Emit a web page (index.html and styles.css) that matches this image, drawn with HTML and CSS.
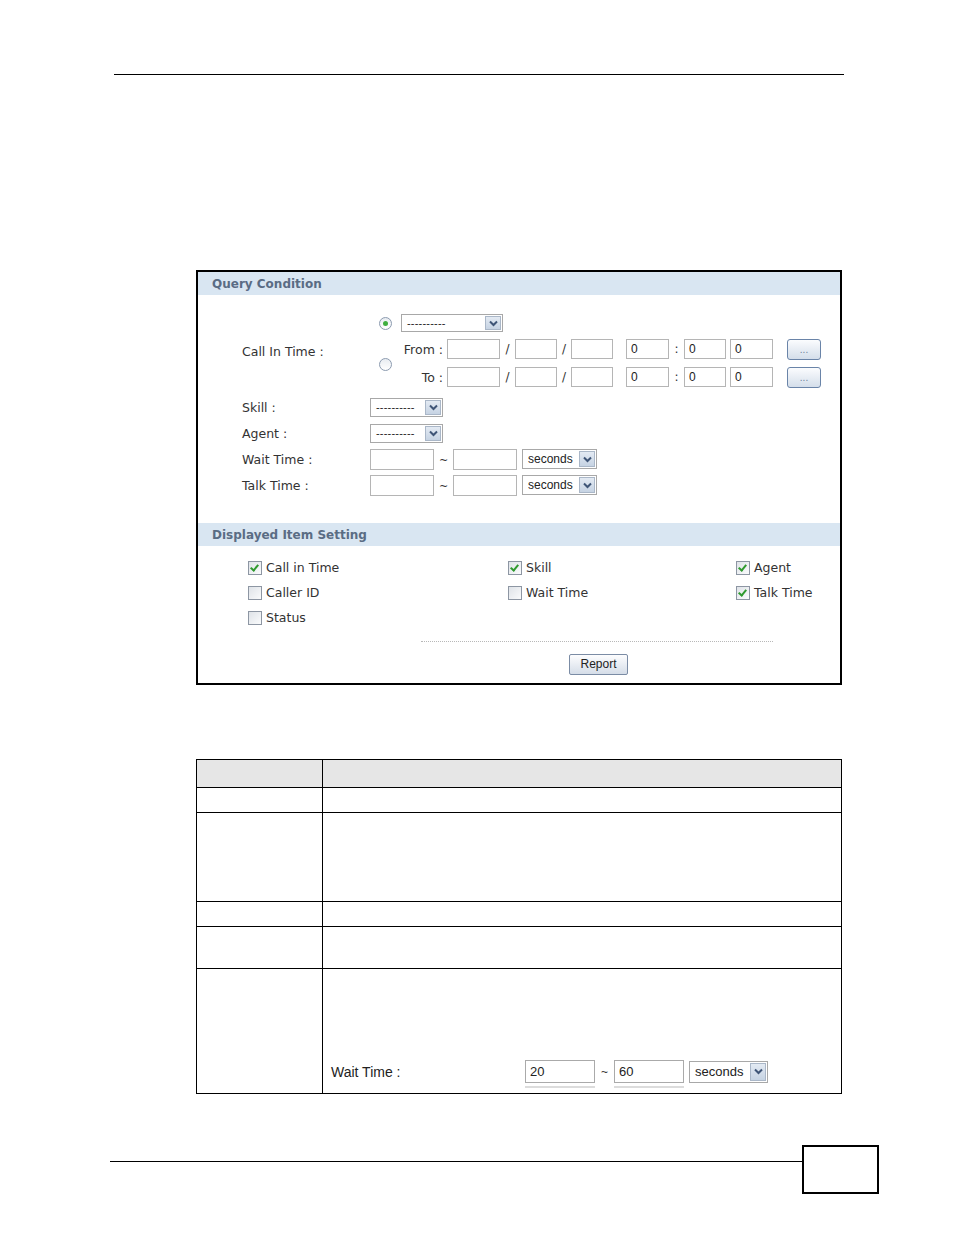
FILE: index.html
```html
<!DOCTYPE html>
<html lang="en">
<head>
    <meta charset="UTF-8">
    <meta name="viewport" content="width=device-width, initial-scale=1.0">
    <title>Call Report</title>
    <link rel="stylesheet" href="styles.css">
</head>
<body>
    <div class="top-rule"></div>

    <div class="figure">
        <div class="band">Query Condition</div>
        <div class="query">
            <div class="call-in">
                <div class="label call-label">Call In Time :</div>
                <div class="radio-col">
                    <div class="radio-cell"><span class="radio checked"></span></div>
                    <div class="radio-cell grow"><span class="radio"></span></div>
                </div>
                <div class="ci-content">
                    <div class="ci-row first">
                        <div class="select wide">
                            <span class="select-text dashes">----------</span>
                            <span class="arrow"><svg width="9" height="7" viewBox="0 0 9 7"><polyline points="1,1.5 4.5,5 8,1.5" fill="none" stroke="#3f5577" stroke-width="2"/></svg></span>
                        </div>
                    </div>
                    <div class="ci-row">
                        <span class="ci-label">From :</span>
                        <span class="field w53"></span><span class="sep s15">/</span>
                        <span class="field w42"></span><span class="sep s14">/</span>
                        <span class="field w42"></span>
                        <span class="field w43 gap13">0</span><span class="sep s15">:</span>
                        <span class="field w42">0</span>
                        <span class="field w43 gap4">0</span>
                        <button class="dots">...</button>
                    </div>
                    <div class="ci-row last">
                        <span class="ci-label">To :</span>
                        <span class="field w53"></span><span class="sep s15">/</span>
                        <span class="field w42"></span><span class="sep s14">/</span>
                        <span class="field w42"></span>
                        <span class="field w43 gap13">0</span><span class="sep s15">:</span>
                        <span class="field w42">0</span>
                        <span class="field w43 gap4">0</span>
                        <button class="dots">...</button>
                    </div>
                </div>
            </div>

            <div class="q-row">
                <div class="label">Skill :</div>
                <div class="select short">
                    <span class="select-text dashes">----------</span>
                    <span class="arrow"><svg width="9" height="7" viewBox="0 0 9 7"><polyline points="1,1.5 4.5,5 8,1.5" fill="none" stroke="#3f5577" stroke-width="2"/></svg></span>
                </div>
            </div>
            <div class="q-row">
                <div class="label">Agent :</div>
                <div class="select short">
                    <span class="select-text dashes">----------</span>
                    <span class="arrow"><svg width="9" height="7" viewBox="0 0 9 7"><polyline points="1,1.5 4.5,5 8,1.5" fill="none" stroke="#3f5577" stroke-width="2"/></svg></span>
                </div>
            </div>
            <div class="q-row">
                <div class="label">Wait Time :</div>
                <span class="field w64 tall"></span><span class="sep tilde">~</span><span class="field w64 tall"></span>
                <div class="select unit">
                    <span class="select-text">seconds</span>
                    <span class="arrow"><svg width="9" height="7" viewBox="0 0 9 7"><polyline points="1,1.5 4.5,5 8,1.5" fill="none" stroke="#3f5577" stroke-width="2"/></svg></span>
                </div>
            </div>
            <div class="q-row">
                <div class="label">Talk Time :</div>
                <span class="field w64 tall"></span><span class="sep tilde">~</span><span class="field w64 tall"></span>
                <div class="select unit">
                    <span class="select-text">seconds</span>
                    <span class="arrow"><svg width="9" height="7" viewBox="0 0 9 7"><polyline points="1,1.5 4.5,5 8,1.5" fill="none" stroke="#3f5577" stroke-width="2"/></svg></span>
                </div>
            </div>
        </div>

        <div class="band">Displayed Item Setting</div>
        <div class="items">
            <label class="item"><span class="check on"></span>Call in Time</label>
            <label class="item"><span class="check on"></span>Skill</label>
            <label class="item"><span class="check on"></span>Agent</label>
            <label class="item"><span class="check"></span>Caller ID</label>
            <label class="item"><span class="check"></span>Wait Time</label>
            <label class="item"><span class="check on"></span>Talk Time</label>
            <label class="item"><span class="check"></span>Status</label>
        </div>
        <div class="dotted"></div>
        <div class="actions"><button class="report">Report</button></div>
    </div>

    <table class="desc">
        <tr class="head"><th class="c1"></th><th></th></tr>
        <tr class="r1"><td></td><td></td></tr>
        <tr class="r2"><td></td><td></td></tr>
        <tr class="r3"><td></td><td></td></tr>
        <tr class="r4"><td></td><td></td></tr>
        <tr class="r5">
            <td></td>
            <td class="example">
                <div class="ex-row">
                    <span class="ex-label">Wait Time :</span>
                    <span class="under"><span class="field ex-field">20</span></span>
                    <span class="sep ex-tilde">~</span>
                    <span class="under"><span class="field ex-field">60</span></span>
                    <div class="select ex-unit">
                        <span class="select-text">seconds</span>
                        <span class="arrow"><svg width="9" height="7" viewBox="0 0 9 7"><polyline points="1,1.5 4.5,5 8,1.5" fill="none" stroke="#3f5577" stroke-width="2"/></svg></span>
                    </div>
                </div>
            </td>
        </tr>
    </table>

    <div class="footer">
        <div class="foot-rule"></div>
        <div class="page-box"></div>
    </div>
</body>
</html>
```

FILE: styles.css
```css
body {
    margin: 0;
    background: #fff;
    color: #000;
    font-family: "DejaVu Sans", Verdana, sans-serif;
}
.top-rule {
    margin: 74px 0 0 114px;
    width: 730px;
    border-top: 1px solid #000;
}
.figure {
    margin: 195px 0 0 196px;
    width: 646px;
    box-sizing: border-box;
    border: 2px solid #000;
    padding-bottom: 8px;
}
.band {
    height: 23px;
    box-sizing: border-box;
    padding: 2px 0 0 14px;
    line-height: 21px;
    background: #d9e6f2;
    color: #5a6c84;
    font-size: 12px;
    font-weight: bold;
}
.query {
    padding: 19px 0 25px 44px;
}
.label {
    width: 128px;
    flex-shrink: 0;
    font-size: 12.5px;
    color: #333;
}
.call-in {
    display: flex;
    align-items: stretch;
}
.call-label {
    display: flex;
    align-items: center;
    padding-top: 2px;
}
.radio-col {
    width: 31px;
    display: flex;
    flex-direction: column;
    align-items: center;
}
.radio-cell {
    height: 18px;
    display: flex;
    align-items: center;
}
.radio-cell.grow {
    flex: 1;
    margin-top: 7px;
    padding-top: 3px;
}
.radio {
    width: 11px;
    height: 11px;
    border: 1px solid #8c9bb0;
    border-radius: 50%;
    background: linear-gradient(#e8ecf1, #fff);
    position: relative;
}
.radio.checked::after {
    content: "";
    position: absolute;
    left: 3px;
    top: 3px;
    width: 5px;
    height: 5px;
    border-radius: 50%;
    background: #3fae3f;
}
.ci-row {
    display: flex;
    align-items: center;
    height: 20px;
    margin-top: 7px;
}
.ci-row.first {
    height: 18px;
    margin-top: 0;
}
.ci-row.last {
    margin-top: 8px;
}
.ci-label {
    width: 42px;
    margin-right: 4px;
    text-align: right;
    font-size: 12.5px;
    color: #333;
}
.field {
    display: inline-block;
    box-sizing: border-box;
    height: 20px;
    line-height: 18px;
    border: 1px solid #b5b5b5;
    padding-left: 4px;
    font-family: "Liberation Sans", Arial, sans-serif;
    font-size: 12px;
    color: #222;
    background: #fff;
    flex-shrink: 0;
}
.field.tall {
    height: 21px;
}
.w42 { width: 42px; }
.w43 { width: 43px; }
.w53 { width: 53px; }
.w64 { width: 64px; }
.gap13 { margin-left: 13px; }
.gap4 { margin-left: 4px; }
.sep {
    display: inline-block;
    text-align: center;
    font-size: 12px;
    color: #333;
    flex-shrink: 0;
}
.s14 { width: 14px; }
.s15 { width: 15px; }
.sep.tilde {
    width: 19px;
    font-size: 11px;
    padding-top: 3px;
}
.dots {
    margin-left: 14px;
    width: 34px;
    height: 21px;
    padding: 0;
    border: 1px solid #6a84a8;
    border-radius: 3px;
    background: linear-gradient(#fbfcfe, #d4deea);
    color: #6f819c;
    font-size: 10px;
    line-height: 17px;
}
.select {
    display: flex;
    align-items: center;
    justify-content: space-between;
    box-sizing: border-box;
    border: 1px solid #a8a8a8;
    background: #fff;
    padding: 1px;
    flex-shrink: 0;
}
.select-text {
    padding-left: 4px;
    font-family: "Liberation Sans", Arial, sans-serif;
    font-size: 12px;
    color: #222;
}
.select-text.dashes {
    font-size: 11px;
    letter-spacing: 0.2px;
    overflow: hidden;
    white-space: nowrap;
}
.arrow {
    display: flex;
    align-items: center;
    justify-content: center;
    width: 16px;
    flex-shrink: 0;
    align-self: stretch;
    box-sizing: border-box;
    border: 1px solid #aab7c8;
    background: linear-gradient(#e3eaf3, #c6d3e3);
}
.select.wide {
    width: 102px;
    height: 18px;
}
.select.short {
    width: 73px;
    height: 19px;
}
.select.unit {
    width: 75px;
    height: 20px;
    margin-left: 5px;
}
.q-row {
    display: flex;
    align-items: center;
    height: 26px;
}
.call-in + .q-row {
    margin-top: 7px;
}
.items {
    display: grid;
    grid-template-columns: 260px 228px auto;
    grid-auto-rows: 25px;
    padding: 9px 0 0 50px;
}
.item {
    display: flex;
    align-items: center;
    font-size: 12.5px;
    color: #333;
}
.check {
    width: 12px;
    height: 12px;
    margin-right: 4px;
    border: 1px solid #8d96a3;
    background: linear-gradient(135deg, #dfe3e8, #fafbfc);
    position: relative;
    flex-shrink: 0;
}
.check.on::after {
    content: "";
    position: absolute;
    left: 3px;
    top: 1px;
    width: 3px;
    height: 6px;
    border: solid #2f9a2f;
    border-width: 0 2px 2px 0;
    transform: rotate(40deg);
}
.dotted {
    margin: 11px 0 0 223px;
    width: 352px;
    border-top: 1px dotted #b8b8b8;
}
.actions {
    margin-top: 11px;
    padding-left: 371px;
}
.report {
    width: 59px;
    height: 21px;
    padding: 0;
    border: 1px solid #7b8ca5;
    border-radius: 2px;
    background: linear-gradient(#fdfdfe, #d5dde8);
    font-family: "Liberation Sans", Arial, sans-serif;
    font-size: 12px;
    color: #222;
}
.desc {
    margin: 74px 0 0 196px;
    width: 646px;
    border-collapse: collapse;
}
.desc th,
.desc td {
    border: 1px solid #000;
    padding: 0;
}
.desc .c1 {
    width: 125px;
}
.desc .head th {
    background: #e6e6e6;
    height: 27px;
}
.desc .r1 td { height: 24px; }
.desc .r2 td { height: 88px; }
.desc .r3 td { height: 24px; }
.desc .r4 td { height: 41px; }
.desc .r5 td { height: 124px; }
.desc .r5 td.example {
    height: 119px;
    vertical-align: bottom;
    padding: 0 0 5px 8px;
}
.ex-row {
    display: flex;
    align-items: flex-start;
    font-family: "Liberation Sans", Arial, sans-serif;
}
.ex-label {
    width: 194px;
    font-size: 14px;
    line-height: 16px;
    color: #222;
    padding-top: 4px;
}
.under {
    display: flex;
    padding-bottom: 3px;
    border-bottom: 2px solid #dcdcdc;
}
.field.ex-field {
    width: 70px;
    height: 23px;
    line-height: 21px;
    font-size: 13px;
    border-color: #aaa;
}
.sep.ex-tilde {
    width: 19px;
    font-size: 12px;
    line-height: 14px;
    padding-top: 5px;
}
.select.ex-unit {
    width: 79px;
    height: 22px;
    margin-left: 5px;
    margin-top: 1px;
}
.ex-unit .select-text {
    font-size: 13px;
}
.footer {
    display: flex;
    align-items: flex-start;
    margin: 51px 0 0 110px;
}
.foot-rule {
    width: 692px;
    margin-top: 16px;
    border-top: 1px solid #000;
}
.page-box {
    width: 77px;
    height: 49px;
    box-sizing: border-box;
    border: 2px solid #000;
}
```
